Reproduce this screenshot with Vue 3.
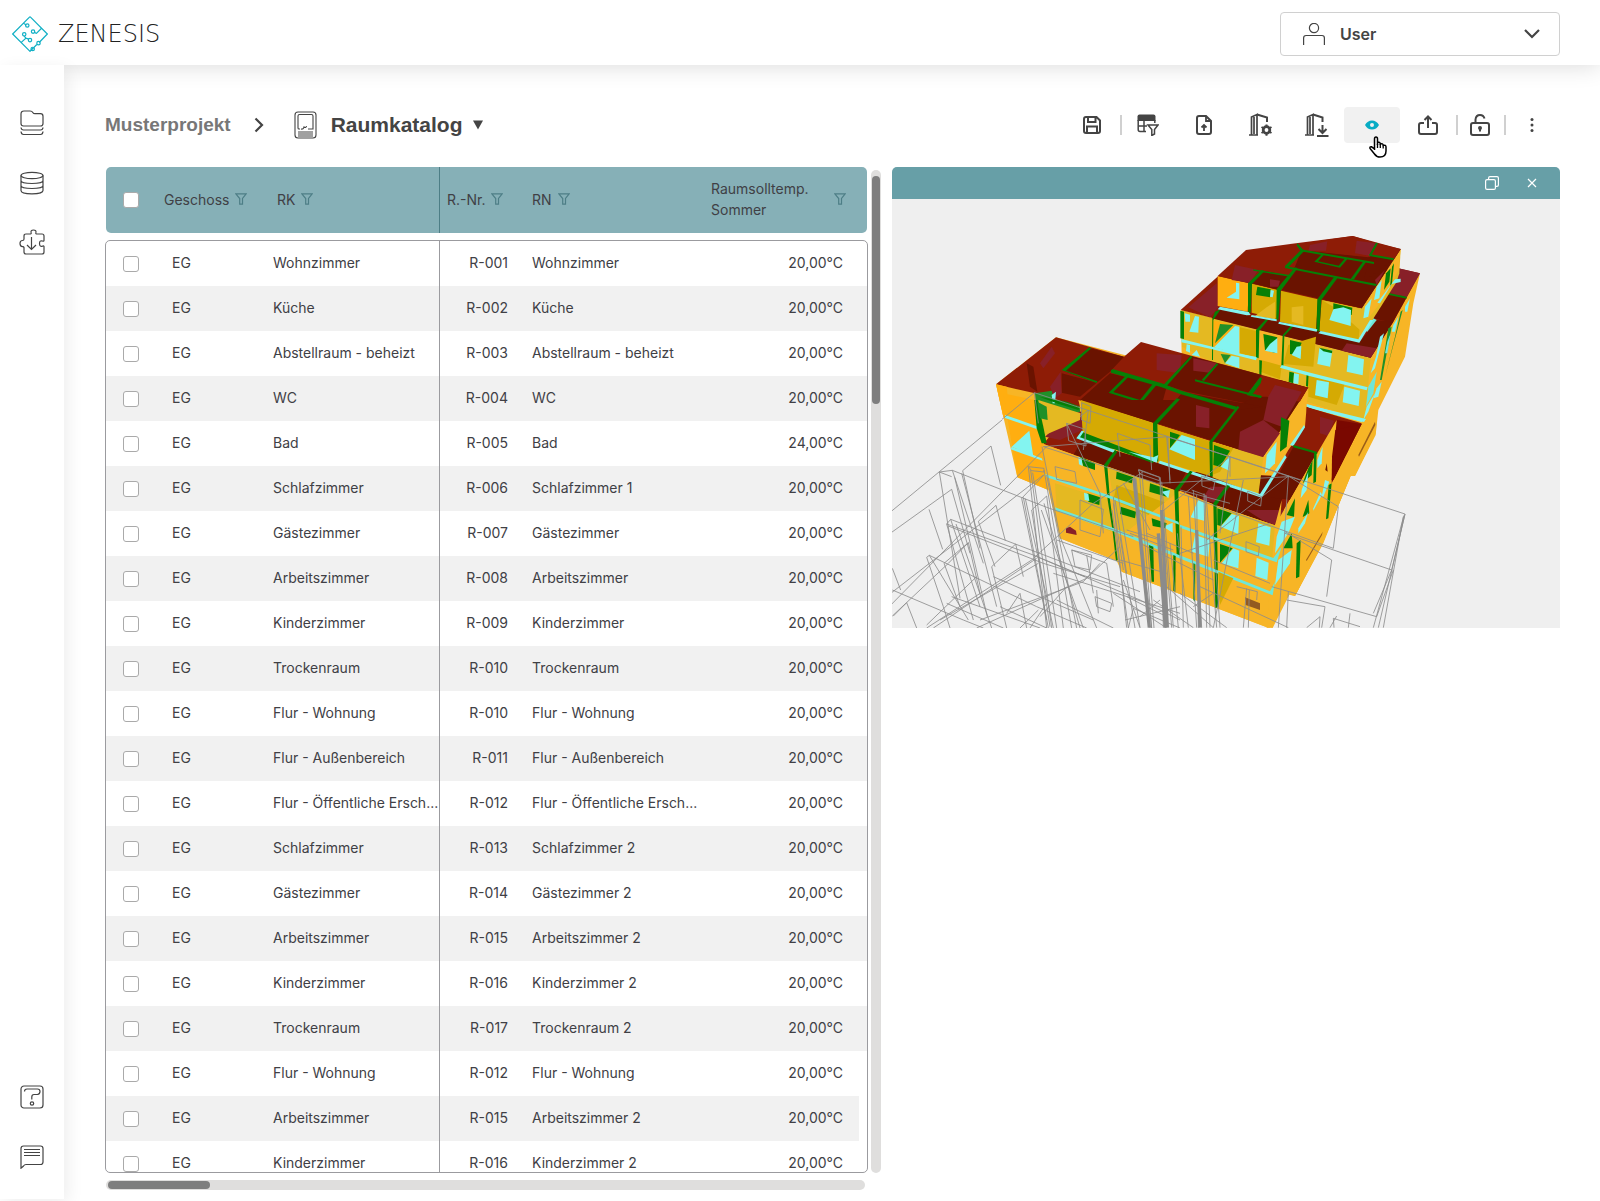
<script setup>
const names = [
  ['Wohnzimmer', 'R-001', 'Wohnzimmer'],
  ['Küche', 'R-002', 'Küche'],
  ['Abstellraum - beheizt', 'R-003', 'Abstellraum - beheizt'],
  ['WC', 'R-004', 'WC'],
  ['Bad', 'R-005', 'Bad', '24,00°C'],
  ['Schlafzimmer', 'R-006', 'Schlafzimmer 1'],
  ['Gästezimmer', 'R-007', 'Gästezimmer'],
  ['Arbeitszimmer', 'R-008', 'Arbeitszimmer'],
  ['Kinderzimmer', 'R-009', 'Kinderzimmer'],
  ['Trockenraum', 'R-010', 'Trockenraum'],
  ['Flur - Wohnung', 'R-010', 'Flur - Wohnung'],
  ['Flur - Außenbereich', 'R-011', 'Flur - Außenbereich'],
  ['Flur - Öffentliche Ersch...', 'R-012', 'Flur - Öffentliche Ersch...'],
  ['Schlafzimmer', 'R-013', 'Schlafzimmer 2'],
  ['Gästezimmer', 'R-014', 'Gästezimmer 2'],
  ['Arbeitszimmer', 'R-015', 'Arbeitszimmer 2'],
  ['Kinderzimmer', 'R-016', 'Kinderzimmer 2'],
  ['Trockenraum', 'R-017', 'Trockenraum 2'],
  ['Flur - Wohnung', 'R-012', 'Flur - Wohnung'],
  ['Arbeitszimmer', 'R-015', 'Arbeitszimmer 2'],
  ['Kinderzimmer', 'R-016', 'Kinderzimmer 2'],
]
const rooms = names.map(([rk, nr, rn, temp = '20,00°C'], i) => ({ id: i, floor: 'EG', rk, nr, rn, temp }))

const columns = [
  { key: 'floor', label: 'Geschoss' },
  { key: 'rk', label: 'RK' },
  { key: 'nr', label: 'R.-Nr.' },
  { key: 'rn', label: 'RN' },
  { key: 'temp', label: 'Raumsolltemp. Sommer' },
]

// Material colours of the model
const Y = '#f7b526', O = '#ffae10', M = '#e4b922', D = '#d5aa03'
const R = '#8e1c06', K = '#6a1300', P = '#882028'
const G = '#068006', L = '#209028', C = '#83f4f0', T = '#6ee6d8'

// Rear block and the roofs of the front block
const rear = [
  [Y, '602,270 1172,413 1320,160 1300,250 1275,410 1195,570 1187,645 1125,768 1112,768 1028,970 945,1128 928,1124 878,1224 860,1222 425,1055 410,1022 240,955 205,810 112,772 70,590 48,493 228,352 606,450'],
  [M, '606,270 835,330 835,420 1155,505 1150,600 840,500 606,380'],
  [M, '910,350 1172,413 1155,600 905,520'],
  [R, '602,270 715,168 1255,145 1320,160 1240,305 1172,413'],
  [K, '695,295 720,268 1145,360 1190,300 1240,305 1172,413'],
  [P, '625,262 710,190 715,262 690,292'],
  [P, '1255,145 1320,160 1280,232 1225,218'],
  [K, '1220,220 1280,232 1238,308 1178,295'],
  [P, '1100,370 1190,385 1172,413 1085,392'],
  [O, '697,300 780,322 780,400 697,380'],
  [D, '780,322 832,334 830,412 780,400'],
  [D, '842,420 905,437 900,478 842,455'],
  [D, '925,375 1008,350 1000,440 910,432'],
  [D, '985,460 1095,490 1070,555 985,530'],
  [G, '601,272 612,275 612,357 601,355'],
  [G, '697,298 705,275 722,268 700,300 699,420 696,420'],
  [L, '705,370 720,312 760,315'],
  [C, '702,382 765,318 778,320 778,402 835,412 825,418'],
  [C, '614,280 630,284 630,305 616,305'],
  [C, '628,335 645,288 657,290 655,338'],
  [G, '828,330 860,295 864,300 838,332 836,415 828,412'],
  [G, '850,342 892,352 884,398 855,390'],
  [C, '855,392 870,372 892,354 892,400'],
  [G, '908,345 935,315 941,318 913,348 910,440 904,438'],
  [G, '930,360 965,368 950,405 930,402'],
  [C, '935,405 950,380 964,378 962,417'],
  [C, '1018,385 1057,392 1050,440 1012,432'],
  [G, '1018,383 1057,392 1056,400 1030,394'],
  [C, '1105,405 1152,418 1148,466 1100,455'],
  [C, '1010,480 1047,487 1043,535 1005,526'],
  [C, '1093,500 1140,512 1136,558 1088,547'],
  [L, '722,402 752,405 735,430'],
  [C, '735,430 755,407 778,412 778,445'],
  [C, '620,373 630,375 630,398 618,393'],
  [C, '635,405 650,390 660,410'],
  [G, '838,420 846,422 844,468 838,466'],
  [G, '928,455 942,458 940,490 926,486'],
  [C, '942,460 957,463 955,492 940,490'],
  [G, '980,458 986,460 984,500 978,498'],
  [C, '604,357 697,380 830,413 828,421 697,388 604,367'],
  [C, '905,435 985,457 1163,502 1160,511 985,467 900,443'],
  [C, '985,555 1158,597 1152,606 985,564'],
  [C, '1188,410 1200,350 1212,340 1185,445 1172,460'],
  [T, '1165,500 1190,455 1180,520 1158,560'],
  [C, '1190,505 1205,485 1195,530 1180,535'],
  [C, '1240,315 1255,290 1245,335 1235,335'],
  [C, '1275,260 1290,235 1282,275 1275,275'],
  [C, '1160,560 1185,520 1165,575 1150,600'],
  [L, '1225,325 1235,320 1205,480 1200,480'],
  [L, '1262,275 1268,270 1215,470 1245,350'],
  [T, '1222,365 1232,340 1222,400 1215,400'],
  [G, '1280,230 1200,214 1200,219 1280,236'],
  [T, '1150,330 1180,295 1190,300 1162,335'],
  // Top storey
  [O, '713,168 807,190 803,275 713,258'],
  [D, '815,190 893,210 890,297 815,278'],
  [D, '903,212 1014,238 1008,330 900,305'],
  [D, '1025,240 1145,265 1165,250 1135,362 1018,333'],
  [M, '1025,240 1150,268 1140,330 1060,260'],
  [M, '860,262 885,245 885,298 825,288'],
  [M, '1145,265 1262,87 1258,160 1250,185 1135,367'],
  [Y, '1150,262 1262,87 1256,150 1212,235 1165,295'],
  [R, '713,168 798,90 948,70 1118,48 1262,87 1145,265'],
  [K, '945,140 965,90 1242,118 1145,265 905,210'],
  [K, '815,190 850,152 930,168 890,208'],
  [K, '1172,105 1262,87 1242,118 1150,185'],
  [P, '755,180 765,135 835,150 810,188'],
  [R, '955,72 1118,48 1190,70 1165,112 1080,103 965,90'],
  [P, '1130,62 1190,70 1172,108 1125,100'],
  [P, '1185,180 1215,150 1190,195'],
  [P, '990,75 1042,64 1038,92 985,92'],
  [R, '1190,70 1262,87 1242,118 1168,104'],
  [P, '870,178 900,182 895,200 870,200'],
  [G, '804,190 845,150 854,153 816,192 812,278 804,276'],
  [G, '890,207 945,142 953,145 902,212 895,300 889,298'],
  [G, '1012,238 1063,170 1073,173 1024,240 1018,335 1009,332'],
  [G, '915,138 1190,192 1188,198 915,144'],
  [G, '962,88 1182,126 1182,132 962,94'],
  [G, '915,138 965,88 972,94 925,142'],
  [G, '952,70 970,90 962,94 950,76'],
  [G, '1168,104 1188,68 1194,70 1174,106'],
  [G, '1168,102 1242,115 1240,121 1168,108'],
  [G, '1003,125 1026,102 1032,104 1014,124 1076,137 1096,114 1103,116 1080,143'],
  [G, '1112,177 1150,124 1158,126 1122,178'],
  [G, '820,148 930,165 930,170 820,152'],
  [G, '832,200 872,208 870,232 828,225'],
  [C, '872,210 882,212 878,232 870,230'],
  [C, '768,188 778,190 778,238 740,233 768,215'],
  [G, '1060,250 1117,263 1115,285 1060,270'],
  [C, '1048,300 1060,268 1090,262 1113,270 1112,318'],
  [M, '935,262 970,258 970,315 935,305'],
  [C, '720,260 806,276 812,285 800,286 713,268'],
  [C, '815,285 890,298 890,304 812,290'],
  [C, '897,305 1012,328 1010,335 895,311'],
  [C, '1022,333 1135,358 1170,300 1180,300 1138,368 1015,340'],
  [C, '1155,260 1175,235 1165,290 1150,295'],
  [C, '1190,200 1205,180 1198,235 1182,240'],
  [G, '1218,160 1232,145 1228,185 1212,210'],
  [G, '1236,140 1242,130 1236,190 1230,200'],
  [C, '1245,178 1262,176 1262,186 1235,192 1200,250 1192,248'],
  // Front block, upper roof
  [R, '48,493 228,352 432,410 483,366 985,503 848,712 295,540 300,560 185,560'],
  [K, '250,452 330,385 432,410 390,455 350,488'],
  [K, '245,460 350,488 300,530 245,518'],
  [P, '180,430 215,380 225,400 190,445'],
  [P, '210,500 242,455 245,520 225,535'],
  [K, '140,430 160,440 172,515 150,500'],
  [P, '530,400 605,405 600,460 530,450'],
  [K, '555,495 630,408 845,465 800,525 845,530 858,470 870,480 850,560 620,515'],
  [P, '640,415 710,430 690,458 640,452'],
  [K, '300,540 390,460 560,500 530,610'],
  [K, '395,520 445,470 525,492 480,545'],
  [K, '530,610 605,520 770,565 690,660'],
  [K, '690,660 772,565 830,520 900,480 985,503 848,712'],
  [K, '600,515 850,560 770,570'],
  [R, '810,530 858,470 985,503 960,545 860,530'],
  [P, '865,530 885,495 965,515 940,560 905,620 850,600'],
  [P, '648,555 688,565 688,625 648,620'],
  [P, '780,635 850,600 900,640 848,712 775,690'],
  [Y, '48,493 165,520 180,625 70,590'],
  [O, '48,493 80,500 90,590 70,590'],
  [M, '165,520 300,560 305,590 180,625'],
  [L, '165,520 215,512 225,545 300,565 300,580 215,560 200,600 172,590'],
  [C, '105,565 130,535 137,578'],
  [C, '215,525 228,515 225,550 218,550'],
  [G, '245,450 328,382 334,385 258,452 352,484 350,489'],
  [G, '393,450 400,448 545,490 604,512 770,560 766,570 600,522 545,502 393,458'],
  [G, '386,518 440,465 448,468 400,516 480,540 520,490 532,492 484,549'],
  [G, '550,495 632,408 638,410 560,498'],
  [G, '665,480 710,430 715,433 672,483'],
  [G, '800,525 840,472 846,475 842,490 818,522 845,528 843,534'],
  [G, '645,478 845,528 843,534 645,484'],
]

// Lower storeys of the front block
const front = [
  [R, '978,20 1145,70 1055,250 1000,140'],
  ['#7a0800', '1070,60 1145,72 1055,250 1050,130'],
  [Y, '1060,250 1190,60 1187,100 1125,228 1112,228 1028,430 945,588 930,580'],
  [Y, '928,62 985,-37 975,80 845,292 855,172'],
  [R, '190,132 270,35 400,150 740,255 845,292 925,150 975,80 980,20 1070,60 1010,158 885,376'],
  [P, '1020,50 1062,62 1045,108 1020,100'],
  [P, '195,110 265,45 320,30 340,75 240,120'],
  [K, '280,165 310,115 405,152 375,197'],
  [K, '385,200 405,152 620,212 590,272'],
  [K, '600,270 635,215 925,230 885,376 705,315'],
  [K, '860,290 940,140 1010,158 930,300'],
  [P, '690,260 745,260 710,310 665,300'],
  [P, '800,330 915,330 885,376 850,362'],
  [O, '70,-20 165,0 195,85 190,140 205,270 112,232'],
  [Y, '190,132 375,197 385,300 400,395 410,482 240,415 205,240'],
  [M, '225,250 385,300 395,395 230,330'],
  [M, '385,200 590,272 600,470 420,420 400,300'],
  [D, '410,255 590,320 590,380 400,300'],
  [Y, '600,272 705,315 885,376 905,300 885,580 420,410'],
  [M, '710,320 885,376 880,480 710,410'],
  [Y, '420,395 870,580 865,683 425,515'],
  [Y, '885,376 1070,60 1055,240 1110,230 1030,430 945,588 925,582 870,683 860,683'],
  ['#7a0800', '1066,90 1145,72 1055,250 1056,170'],
  [M, '175,0 302,40 300,60 195,105'],
  [D, '302,0 525,70 520,185 308,100'],
  [D, '530,72 695,125 690,228 530,180'],
  [M, '697,125 850,172 835,285 697,232'],
  [D, '697,125 760,145 720,215 697,225'],
  [K, '310,0 590,0 525,70'],
  [G, '519,70 590,-5 600,-2 532,72 535,185 520,182'],
  [G, '688,125 772,18 778,22 698,126 698,230 690,228'],
  [G, '289,115 305,95 520,178 520,190 410,150 300,118'],
  [C, '289,115 305,92 312,94 300,112 405,150 400,158'],
  [C, '445,155 520,172 535,165 530,188'],
  [G, '570,95 600,105 570,145'],
  [C, '568,148 605,105 645,118 645,180'],
  [G, '702,135 750,152 720,200 700,195'],
  [C, '722,200 750,165 748,212'],
  [C, '540,182 840,282 915,165 920,172 845,293 535,190'],
  [C, '855,220 860,165 890,125 885,190'],
  [G, '903,52 928,62 920,140 900,155'],
  [C, '930,135 972,75 975,82 940,138'],
  [C, '980,12 1150,60 1145,66 980,20'],
  [C, '75,45 175,80 178,90 75,54'],
  [C, '95,140 148,92 160,170'],
  [C, '95,140 185,175 188,182 92,148'],
  [G, '163,0 172,0 190,80 200,130 185,130 170,85'],
  [L, '172,5 200,20 203,60 180,55'],
  [G, '178,-10 260,5 300,20 295,30 230,10'],
  [G, '372,195 405,150 412,155 382,198 390,300 403,395 413,480 408,483 398,395 383,300'],
  [G, '300,170 345,190 345,210 310,198'],
  [C, '295,170 305,175 308,198 297,193'],
  [G, '410,215 460,232 455,250 408,236'],
  [G, '583,270 630,212 638,215 595,272 600,470 590,466'],
  [G, '510,250 570,270 560,290 508,275'],
  [C, '545,275 570,270 565,295'],
  [G, '700,310 740,255 750,258 710,315 715,620 706,625'],
  [C, '632,352 655,300 675,310 672,362'],
  [G, '712,325 755,340 722,378 712,375'],
  [C, '722,380 755,342 777,348 775,402'],
  [C, '835,370 872,382 868,437 828,427'],
  [G, '322,280 360,292 358,315 325,305'],
  [C, '312,278 325,282 328,303 314,300'],
  [G, '422,320 468,335 465,355 420,342'],
  [C, '550,380 578,368 578,398'],
  [G, '515,355 560,370 555,385 518,378'],
  [C, '635,455 645,405 690,420 685,470'],
  [G, '720,432 758,445 720,488'],
  [C, '725,490 760,445 778,452 775,505'],
  [C, '830,473 866,488 862,540 826,528'],
  [T, '195,222 385,285 595,365 598,374 385,294 200,232'],
  [T, '225,322 400,384 590,462 870,574 885,545 878,586 590,472 400,394 228,332'],
  [T, '600,374 880,474 905,440 890,487 600,383'],
  [G, '507,435 520,440 522,545 515,545'],
  [G, '580,465 587,468 586,575 580,572'],
  [L, '640,490 646,492 645,605 640,600'],
  [D, '715,515 760,535 720,615'],
  [G, '940,135 1010,155 1012,162 940,142'],
  [G, '985,205 998,180 995,225 968,250'],
  [G, '1002,160 1010,155 1008,245 1000,250'],
  [G, '920,345 945,295 942,350'],
  [C, '890,410 905,365 945,350 925,400 885,460'],
  [C, '965,270 985,215 980,270 962,295'],
  [C, '1012,180 1028,140 1025,190 1012,205'],
  [C, '1025,290 1035,240 1048,245 1030,290'],
  [G, '1046,255 1055,250 1045,355 1038,358'],
  [G, '910,445 935,400 938,445'],
  [C, '885,555 895,480 935,450 930,490'],
  [G, '950,430 962,420 958,530 948,535'],
  [G, '968,350 985,300 988,340 970,350'],
  [C, '955,385 985,335 975,370 955,400'],
  [C, '1000,325 1022,275 1026,285 1000,332'],
  [P, '258,385 270,380 288,392 290,405 258,398'],
  ['#935a20', '795,592 840,610 840,630 797,615'],
  [K, '1040,190 1043,215 1036,210'],
  ['#9a5d18', '1135,165 1185,65 1186,75 1137,170'],
  ['#9a5d18', '978,480 1028,395 1026,405 980,483'],
]

// Wireframe of the hidden part of the model
const wires = [
  'M0,302L366,0M0,362L215,208M0,588L500,80M0,545L490,165',
  'M178,156L217,151L500,262L760,350M178,156L215,170M147,268L188,388M215,208L270,400M37,510L250,600L310,624M37,445L62,510',
  'M248,152L333,78L362,196M248,152L300,385M178,156L240,535M217,151L310,430M224,172L322,590M245,160L350,560',
  'M295,304L348,256L376,362M295,304L345,440M335,440L407,372L430,470M335,440L380,624M200,312L212,298L780,515M200,312L460,405L615,470M205,318L490,430M200,312L280,600M212,298L300,560M228,312L335,624',
  'M140,412L148,406L470,560L620,624M140,412L190,560L210,624M148,406L265,600M192,430L265,368L300,520M192,430L240,560M37,588L205,430L265,368M80,548L110,624M80,548L40,588',
  'M140,624L455,420L640,250L790,155M160,624L470,415M180,600L475,430M290,624L620,475L720,380M300,600L610,485L660,430M140,615L290,470',
  'M445,140L492,145L492,156L455,152ZM445,140L500,624M452,150L515,624M458,158L530,624M492,150L575,624M500,165L590,624M425,235L500,600M430,232L505,624M436,236L520,624M425,235L492,165',
  'M455,270L500,228L550,624M455,270L510,620M484,270L610,624M492,250L600,624M525,140L585,155L590,190L530,178ZM560,10L615,28L618,78L566,62ZM486,80L540,350L650,624',
  'M600,240L670,268L660,350L600,330ZM575,390L635,405L630,450L585,440ZM575,390L680,430L700,560M620,405L640,520M530,360L730,430M490,430L720,500M520,460L900,580M470,410L780,540L900,600',
  'M712,40L810,75L815,150M712,40L720,110M863,50L870,190M490,80L863,50M560,10L660,220L670,340M490,80L830,190L1228,170',
  'M775,150L838,172L838,182L780,162ZM762,175L795,500L810,624M768,175L800,500L815,624M778,155L815,624M786,160L822,624M700,250L730,450M705,240L740,460M730,190L810,330M696,270L745,624M720,350L765,624',
  'M645,530L695,550L690,575L650,560ZM650,510L655,580M380,580L420,520L440,624M360,560L500,624M200,550L370,624M215,530L480,624M340,470L640,600M420,624L475,570M450,624L500,550M480,590L560,500M745,624L760,565L900,624M735,600L900,560M700,520L860,624M530,540L700,624',
]
const wiresRight = [
  'M475,208L540,232L550,683M540,232L575,683M545,245L580,683M560,110L750,170L1275,342L1235,510M750,170L750,230M560,110L570,240M750,170L540,340M665,228L705,242L700,270L666,258Z',
  'M635,270L675,285L690,683M625,290L650,683M640,270L665,683M650,285L655,683M672,280L680,683M678,285L710,683M603,380L610,683M592,400L625,683M570,430L595,683M700,400L720,683',
  'M803,273L845,290L842,318L803,303ZM798,425L838,440L835,468L798,455ZM925,228L895,683M925,228L1075,320L1060,445M925,228L680,420M750,170L720,400M790,240L700,683M915,400L1235,510M1275,342L1195,683M1270,350L1210,683M1272,346L1180,683',
  'M600,270L750,310M600,280L1060,445M915,395L1055,480L1040,590M920,600L1035,620L1025,683M875,560L1190,650M700,480L870,550M925,575L920,683M600,460L870,370M660,560L925,683M800,565L790,683M808,570L805,683M770,560L832,575L830,600',
  'M1060,655L1140,680M1070,648L1050,683M1060,655L1062,683M1235,510L1180,640M400,290L410,400L440,683M410,260L480,683M440,390L540,420L540,470M450,400L580,450M420,480L560,520M430,540L480,683M440,590L560,650M980,683L1020,650L1018,683M1110,640L1105,683M1190,650L1240,510',
  'M500,400L640,460M480,430L700,540M520,600L640,683M560,560L700,683M600,580L740,683M480,650L540,600M640,620L700,580',
]
</script>

<template>
  <div class="app">
    <header class="topbar">
      <a href="#" class="brand" aria-label="Zenesis">
        <svg width="36" height="36" viewBox="0 0 106 106" fill="none" stroke="#12b0c5" stroke-width="3.6">
          <path d="M53 2 104 53 80 78M73 84 53 104 2 53 53 2M34 21 42 27M87 36 72 51 67 49M28 77 41 65 36 59M41 65 49 68M62 93 53 104" />
          <circle cx="45" cy="28" r="5" /><circle cx="62" cy="46" r="5" /><circle cx="36" cy="54" r="5" />
          <circle cx="53" cy="71" r="5" /><circle cx="78" cy="80" r="5" /><circle cx="61" cy="97" r="5" />
        </svg>
        <span class="wordmark">ZENESIS</span>
      </a>
      <button type="button" class="user">
        <svg width="22" height="22" viewBox="0 0 22 22" fill="none" stroke="#444" stroke-width="1.2">
          <circle cx="11" cy="5" r="4.6" /><path d="M.6 22V15q0-2.500 2.500-2.500H19q2.400 0 2.400 2.500V22" />
        </svg>
        <span>User</span>
        <svg class="caret" width="16" height="10" viewBox="0 0 16 10" fill="none" stroke="#444" stroke-width="2.2"><path d="M1 1 8 8 15 1" /></svg>
      </button>
    </header>

    <div class="shell">
      <nav class="sidebar" aria-label="Hauptnavigation">
        <a href="#" aria-label="Projekte">
          <svg width="24" height="26" viewBox="0 0 24 26"><path d="M1 4q0-3 3-3H10q2 0 3 1.800 .5 .9 2 .9H20.500q2.500 0 2.500 2.500V13.500q0 2.500-2.500 2.500H3.500Q1 16 1 13.500ZM1 17.500q.3 2.500 2.500 2.500H20.500q2.300 0 2.500-2.500M1 21.500q.3 3 2.500 3H20.500q2.300 0 2.500-3" /></svg>
        </a>
        <a href="#" aria-label="Datenbank">
          <svg width="24" height="24" viewBox="0 0 24 24"><ellipse cx="12" cy="4.500" rx="11" ry="3.200" /><path d="M1 4.500V19.500C1 24 23 24 23 19.500V4.500M1 9.500C1 13.500 23 13.500 23 9.500M1 14.500C1 18.500 23 18.500 23 14.500" /></svg>
        </a>
        <a href="#" aria-label="Erweiterungen">
          <svg width="26" height="28" viewBox="0 0 26 28"><path d="M5 9V7q0-2 2-2H11.500q1-.3 .6-1.600Q11.500 1 14.500 1t2.400 2.400Q16.500 4.700 17.500 5H23q2 0 2 2V11.500q-.3 1-1.500 .5Q20.500 11 20.500 14.500t3 2.600Q24.700 16.700 25 17.500V23q0 2-2 2H7q-2 0-2-2V18.500q-.3-1-1.500-.8Q1 17.500 1 14.500T3.500 11.500Q5 11.500 5 10ZM12.500 8V20M8 16 12.500 20.500 17 16" /></svg>
        </a>
        <div class="spacer"></div>
        <a href="#" aria-label="Hilfe">
          <svg width="24" height="24" viewBox="0 0 24 24"><rect x="1" y="1" width="22" height="22" rx="3" /><path d="M4.500 6.500Q4.500 4 7 4H17.500Q20 4 20 6.500T17.500 9.500H14Q11.800 9.500 11.800 12V14.500" /><circle cx="12" cy="18.500" r="1.700" /></svg>
        </a>
        <a href="#" aria-label="Nachrichten">
          <svg width="24" height="24" viewBox="0 0 24 24"><path d="M1 3.500Q1 1 3.500 1H20.500Q23 1 23 3.500V17Q23 19.500 20.500 19.500H6Q4.500 19.500 3.500 21L1 23.200ZM4 4.500H20M4 7.500H20M4 10.500H20" /></svg>
        </a>
      </nav>

      <main>
        <div class="headline">
          <a href="#" class="project">Musterprojekt</a>
          <svg class="sep-arrow" width="10" height="16" viewBox="0 0 10 16" fill="none" stroke="#444" stroke-width="2.2"><path d="M1.500 1.500 8 8 1.500 14.500" /></svg>
          <svg class="book" width="24" height="28" viewBox="0 0 24 28" fill="none" stroke="#444" stroke-width="1.1"><rect x="1" y="1" width="21" height="26" rx="3" /><path d="M6 18H5Q4 18 4 17V5Q4 3.500 5.500 3.500H17.500Q19 3.500 19 5V18H14M7 18Q9.500 18.500 10 16 12 17.500 12.500 15M4 21H19M4 23H19M4 25H19" /></svg>
          <button type="button" class="title">Raumkatalog
            <svg width="10" height="10" viewBox="0 0 10 10" fill="#444"><path d="M0 .5H10L5 9.500Z" /></svg>
          </button>

          <div class="toolbar" role="toolbar" aria-label="Werkzeuge">
            <button type="button" aria-label="Speichern">
              <svg width="18" height="18" viewBox="0 0 18 18"><path d="M1 3Q1 1 3 1H13.500L17 4.500V15Q17 17 15 17H3Q1 17 1 15ZM5 1V6H12.500V1M4 17V10.500H14V17" /></svg>
            </button>
            <i></i>
            <button type="button" aria-label="Tabellenfilter">
              <svg width="22" height="22" viewBox="0 0 22 22"><path d="M.5 7V2.500Q.5 .5 2.500 .5H16.500Q18.500 .5 18.500 2.500V7Z" class="solid" /><path d="M1.200 6V15.500Q1.200 17.500 3 17.500H9M1 12H10M7 6V17.500M17.800 6V9" stroke-width="1.500" /><path d="M11 11H21L17.500 15.500V20L14.800 21.500V15.500Z" stroke-width="1.500" /></svg>
            </button>
            <button type="button" aria-label="Datei hochladen">
              <svg width="16" height="20" viewBox="0 0 16 20"><path d="M1 3Q1 1 3 1H10L15 6V17Q15 19 13 19H3Q1 19 1 17Z" /><path d="M10 1V6H15M8 16V10.500M5.500 12.500 8 10 10.500 12.500" stroke-width="1.800" /></svg>
            </button>
            <button type="button" aria-label="Gebäude konfigurieren">
              <svg width="25" height="24" viewBox="0 0 25 24"><path d="M1 22H10M3.500 22V4L9 1.500V22M6 4V21" stroke-width="1.700" /><path d="M9 1.500 19 4.500V9" /><circle cx="18.500" cy="17" r="3.300" stroke-width="2.800" /><path d="M18.500 11.500V14M18.500 20V22.700M13.500 14 16 15.500M21 18.500 23.500 20M13.500 20 16 18.500M21 15.500 23.500 14" /></svg>
            </button>
            <button type="button" aria-label="Gebäude herunterladen">
              <svg width="25" height="24" viewBox="0 0 25 24"><path d="M1 22H10M3.500 22V4L9 1.500V22M6 4V21" stroke-width="1.700" /><path d="M9 1.500 18.500 4.500V9M18.500 12V19.500M14.500 16 18.500 20 22.500 16M13 23H24.500" /></svg>
            </button>
            <button type="button" class="active" aria-label="3D-Ansicht" aria-pressed="true">
              <svg width="14" height="10" viewBox="0 0 14 10"><path d="M0 5Q2.500 .5 7 .5T14 5Q11.500 9.500 7 9.500T0 5ZM7 3A2 2 0 1 0 7 7 2 2 0 1 0 7 3Z" fill="#08acc4" fill-rule="evenodd" stroke="none" /></svg>
              <svg class="cursor" width="20" height="22" viewBox="0 0 20 22"><path d="M6.500 14V3Q6.500 1 8 1T9.500 3V9V6.500Q12 5.500 12.300 8 15 7 15.200 9.300 18 8.700 18 11V15Q18 21 12 21 8.500 21 6.500 18L2 12.500Q1.500 10.500 3.500 10.800L6.500 13Z" fill="#fff" stroke="#000" stroke-width="1.500" /><path d="M9.500 8V12M12.300 8V12M15.200 9.500V12.500" stroke="#000" stroke-width="1.300" /></svg>
            </button>
            <button type="button" aria-label="Exportieren">
              <svg width="20" height="20" viewBox="0 0 20 20"><path d="M6 8H3Q1 8 1 10V17Q1 19 3 19H17Q19 19 19 17V10Q19 8 17 8H14M10 13V2M6.500 5 10 1.500 13.500 5" /></svg>
            </button>
            <i></i>
            <button type="button" class="narrow" aria-label="Entsperren">
              <svg width="20" height="22" viewBox="0 0 20 22"><rect x="1" y="9" width="18" height="12" rx="2" /><path d="M5.500 9V5.500Q6 1 10 1 13.500 1 14.500 4.500M10 14V17.500" /><circle cx="10" cy="14" r="1" /></svg>
            </button>
            <i></i>
            <button type="button" aria-label="Weitere Aktionen">
              <svg width="4" height="14" viewBox="0 0 4 14"><g class="solid"><circle cx="2" cy="1.600" r="1.500" /><circle cx="2" cy="7" r="1.500" /><circle cx="2" cy="12.400" r="1.500" /></g></svg>
            </button>
          </div>
        </div>

        <div class="content">
          <section class="catalog">
            <div class="grid-area">
              <table>
                <thead>
                  <tr>
                    <th class="select"><input type="checkbox" aria-label="Alle auswählen" /></th>
                    <th v-for="c in columns" :key="c.key" :class="c.key" scope="col">
                      <span>{{ c.label }}</span>
                      <button type="button" class="filter" :aria-label="c.label + ' filtern'">
                        <svg width="12" height="12" viewBox="0 0 12 12" fill="none" stroke="#4d7e86" stroke-width="1.2"><path d="M.8 .8H11.200L7.500 5.500V11.200H4.700V5.500Z" /></svg>
                      </button>
                    </th>
                  </tr>
                </thead>
                <tbody>
                  <tr v-for="r in rooms" :key="r.id">
                    <td class="select"><input type="checkbox" :aria-label="r.nr + ' auswählen'" /></td>
                    <td v-for="c in columns" :key="c.key" :class="c.key">{{ r[c.key] }}</td>
                  </tr>
                </tbody>
              </table>
              <div class="track vertical"><div class="thumb"></div></div>
            </div>
            <div class="track horizontal"><div class="thumb"></div></div>
          </section>

          <section class="viewer" aria-label="3D-Modell">
            <div class="viewer-bar">
              <button type="button" aria-label="In neuem Fenster öffnen">
                <svg width="14" height="14" viewBox="0 0 14 14"><rect x=".6" y="3.600" width="9.800" height="9.800" rx="1.500" /><path d="M3.600 3.500V2Q3.600 .6 5 .6H12Q13.400 .6 13.400 2V9Q13.400 10.400 12 10.400H10.500" /></svg>
              </button>
              <button type="button" aria-label="Schließen">
                <svg width="10" height="10" viewBox="0 0 10 10"><path d="M1 1 9 9M9 1 1 9" /></svg>
              </button>
            </div>
            <svg class="model" viewBox="-264 -63 2004 1287">
              <polygon v-for="(s, i) in rear" :key="'r' + i" :fill="s[0]" :points="s[1]" />
              <g transform="translate(0 540)">
                <polygon v-for="(s, i) in front" :key="'f' + i" :fill="s[0]" :points="s[1]" />
              </g>
              <g class="wires">
                <g transform="translate(-300 600)"><path v-for="(d, i) in wires" :key="i" :d="d" /></g>
                <g transform="translate(0 540)">
                  <path v-for="(d, i) in wiresRight" :key="i" :d="d" />
                  <path class="bundle" d="M545,330L562,683M535,400L556,683M650,390L660,683M462,235L508,683" />
                </g>
                <path d="M66,598L163,518L960,780M163,518L175,610M300,590L325,570L310,690M305,548L333,560L330,610L305,600Z" />
              </g>
            </svg>
          </section>
        </div>
      </main>
    </div>
  </div>
</template>

<style>
body {
  margin: 0;
}
</style>

<style scoped>
* {
  box-sizing: border-box;
}
.app {
  display: flex;
  flex-direction: column;
  height: 100vh;
  overflow: hidden;
  background: #fff;
  color: #444;
  font-family: Inter, "Noto Sans", sans-serif;
  font-size: 14px;
}
button {
  display: flex;
  align-items: center;
  padding: 0;
  border: 0;
  background: none;
  color: inherit;
  font: inherit;
}
a {
  color: inherit;
  text-decoration: none;
}
svg {
  flex: none;
}
.topbar {
  position: relative;
  z-index: 1;
  display: flex;
  align-items: center;
  justify-content: space-between;
  height: 65px;
  padding: 2px 40px 0 12px;
  background: #fff;
  box-shadow: 0 0 24px rgba(0, 0, 0, 0.16);
}
.brand {
  display: flex;
  align-items: center;
  gap: 10px;
}
.wordmark {
  color: #222;
  font-family: "DejaVu Sans", sans-serif;
  font-weight: 200;
  font-size: 24px;
}
.user {
  width: 280px;
  height: 44px;
  padding: 0 19px 0 22px;
  border: 1px solid #d0d0d0;
  border-radius: 4px;
  font-size: 16px;
  font-weight: 600;
  gap: 15px;
}
.caret {
  margin-left: auto;
}
.shell {
  display: flex;
  flex: 1;
  min-height: 0;
}
.sidebar {
  position: relative;
  z-index: 2;
  display: flex;
  flex-direction: column;
  flex: none;
  width: 64px;
  margin-bottom: 2px;
  padding: 28px 0 12px;
  background: #fff;
  box-shadow: 4px 4px 16px rgba(0, 0, 0, 0.07);
}
.sidebar a {
  display: flex;
  align-items: center;
  justify-content: center;
  height: 60px;
}
.sidebar svg {
  fill: none;
  stroke: #444;
  stroke-width: 1.2;
}
.spacer {
  flex: 1;
}
main {
  display: flex;
  flex: 1;
  flex-direction: column;
  gap: 24px;
  min-width: 0;
  padding: 42px 40px 11px 41px;
}
.headline {
  display: flex;
  align-items: center;
  height: 36px;
  font-family: "Liberation Sans", Arial, sans-serif;
  font-weight: 700;
}
.project {
  color: #777;
  font-size: 19px;
}
.sep-arrow {
  margin: 0 30px 0 23px;
}
.title {
  gap: 10px;
  margin-left: 13px;
  font-size: 21px;
}
.toolbar {
  display: flex;
  align-items: center;
  margin-left: auto;
}
.toolbar button {
  position: relative;
  justify-content: center;
  width: 56px;
  height: 36px;
  border-radius: 4px;
}
.toolbar .narrow {
  width: 48px;
}
.toolbar .active {
  background: #f1f1f1;
}
.toolbar i {
  width: 2px;
  height: 20px;
  margin-right: -2px;
  background: #d0d0d0;
}
.toolbar svg {
  fill: none;
  stroke: #444;
  stroke-width: 2;
}
.toolbar .solid {
  fill: #444;
  stroke: none;
}
.toolbar .cursor {
  position: absolute;
  top: 29px;
  left: 24px;
}
.content {
  display: flex;
  flex: 1;
  align-items: flex-start;
  gap: 11px;
  min-height: 0;
}
.catalog {
  display: flex;
  flex-direction: column;
  flex: none;
  gap: 7px;
  width: 776px;
  height: 100%;
}
.grid-area {
  display: flex;
  flex: 1;
  gap: 3px;
  min-height: 0;
}
table {
  display: flex;
  flex: 1;
  flex-direction: column;
  gap: 7px;
}
thead {
  display: block;
  margin: 0 1px;
  border-radius: 5px;
  background: #86b0b7;
}
tbody {
  display: block;
  flex: 1;
  min-height: 0;
  overflow: hidden;
  border: 1px solid #9b9b9f;
  border-radius: 5px;
}
tr {
  display: grid;
  grid-template-columns: 48px 109px 177px 80px 180px 1fr;
  height: 45px;
}
thead tr {
  height: 66px;
}
tbody tr:nth-child(even) {
  background: #f1f1f1;
}
tbody tr:nth-child(20) {
  width: calc(100% - 8px);
}
tbody tr:nth-child(20) .temp {
  padding-right: 16px;
}
th,
td {
  display: flex;
  align-items: center;
  padding: 0 0 2px;
  color: #404045;
  font-weight: 400;
  white-space: nowrap;
}
th {
  gap: 6px;
  line-height: 21px;
  text-align: left;
}
.select {
  padding: 0 0 0 17px;
}
th.floor {
  padding-left: 10px;
}
td.floor {
  padding-left: 18px;
}
.rk {
  border-right: 1px solid #9b9b9f;
}
th.rk {
  padding-left: 14px;
  border-color: #4d7e86;
}
td.rk {
  padding-left: 10px;
}
th.nr {
  padding-left: 7px;
}
td.nr {
  justify-content: flex-end;
  padding-right: 12px;
}
.rn {
  padding-left: 12px;
}
th.temp {
  justify-content: space-between;
  padding-right: 21px;
  padding-left: 11px;
  white-space: normal;
}
th.temp span {
  width: 110px;
}
td.temp {
  justify-content: flex-end;
  padding-right: 24px;
}
input[type="checkbox"] {
  width: 16px;
  height: 16px;
  margin: 0;
  border: 1px solid #aaa;
  border-radius: 3px;
  appearance: none;
  background: #fff;
}
.track {
  border-radius: 5px;
  background: #dfdedd;
}
.thumb {
  border-radius: 4px;
  background: #7e7e7e;
}
.vertical {
  width: 10px;
  margin-top: 3px;
  padding: 6px 1px;
}
.vertical .thumb {
  height: 23%;
}
.horizontal {
  height: 10px;
  margin: 0 16px 0 1px;
  padding: 1px 2px;
}
.horizontal .thumb {
  width: 102px;
  height: 8px;
}
.viewer {
  flex: 1;
  min-width: 0;
  overflow: hidden;
  border-radius: 5px 5px 0 0;
  background: #efefef;
}
.viewer-bar {
  display: flex;
  align-items: center;
  justify-content: flex-end;
  gap: 28px;
  height: 32px;
  padding-right: 23px;
  background: #679fa7;
}
.viewer-bar svg {
  fill: none;
  stroke: #fff;
  stroke-width: 1.2;
}
.model {
  display: block;
  width: 100%;
  height: auto;
}
.wires {
  fill: none;
  stroke: #8b8b8b;
  stroke-width: 2.5;
}
.bundle {
  stroke-width: 10;
}
</style>
